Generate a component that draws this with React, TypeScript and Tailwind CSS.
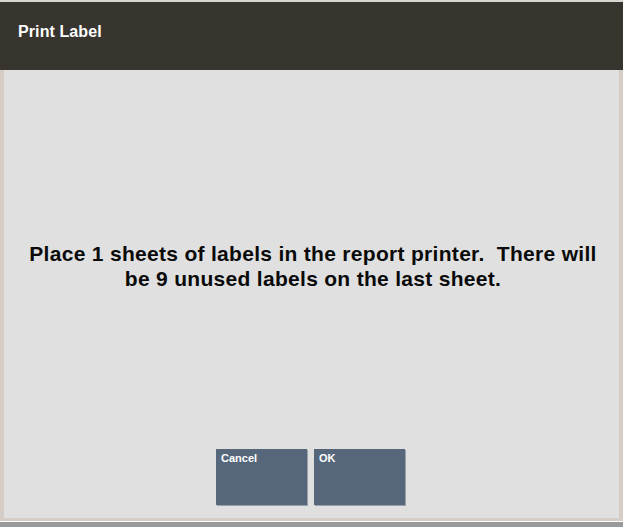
import React from "react";

export default function App() {
  const font = { fontFamily: '"Liberation Sans", Arial, sans-serif' };
  return (
    <div className="w-[623px] h-[527px] flex flex-col bg-[#999999] overflow-hidden" style={font}>
      <div className="h-[2px] bg-[#d8d6d3]" />
      <div className="h-[68px] bg-[#38352f] flex items-center px-[18px] pb-[9px]">
        <span className="text-white font-bold text-[16px] tracking-[0.1px]">Print Label</span>
      </div>
      <div className="h-[451px] bg-[#e0e0e0] border-l-[4px] border-r-[4px] border-b-[3px] border-[#d6cec6] flex flex-col items-center">
        <div className="mt-[171px] ml-[3px] text-center text-[21px] font-bold leading-[25px] tracking-[0.3px] text-[#0a0a0a] whitespace-pre">
          {"Place 1 sheets of labels in the report printer.  There will\nbe 9 unused labels on the last sheet."}
        </div>
        <div className="mt-[158px] mr-[2px] flex gap-[7px]">
          <button className="w-[91px] h-[56px] bg-[#56677b] text-left flex items-start px-[5px] pt-[1px] text-white font-bold text-[11px] shadow-[1px_1px_0_#9aa0a8]">
            Cancel
          </button>
          <button className="w-[91px] h-[56px] bg-[#56677b] text-left flex items-start px-[5px] pt-[1px] text-white font-bold text-[11px] shadow-[1px_1px_0_#9aa0a8]">
            OK
          </button>
        </div>
      </div>
      <div className="h-[1px] bg-white" />
      <div className="flex-1 bg-[#9a9a9a]" />
    </div>
  );
}
